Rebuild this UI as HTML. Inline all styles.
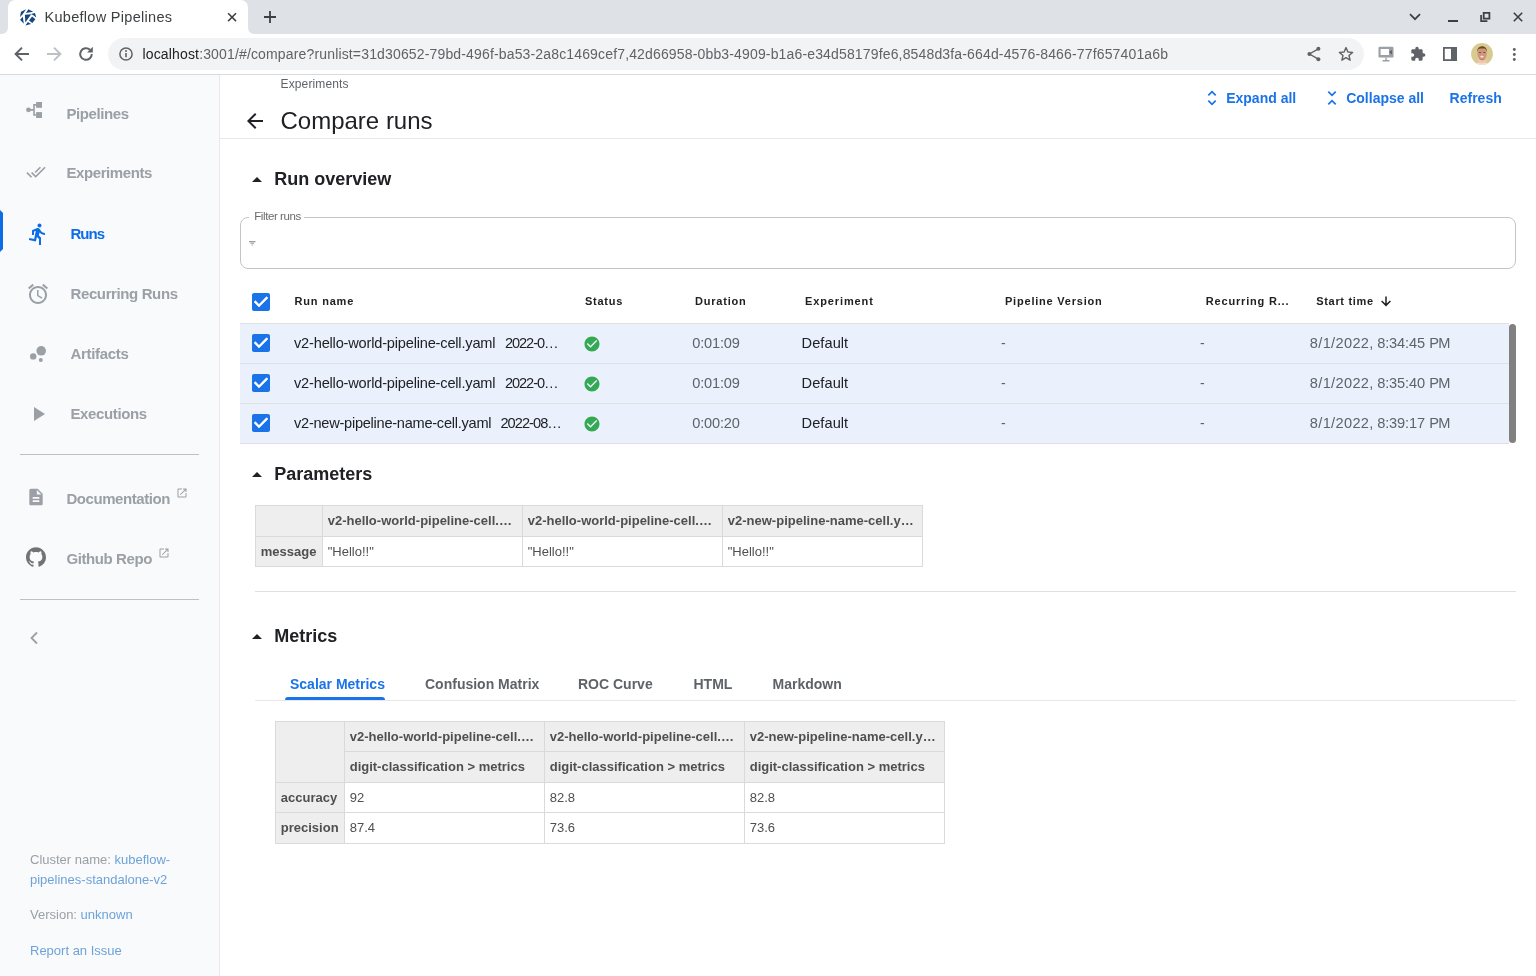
<!DOCTYPE html>
<html lang="en"><head><meta charset="utf-8"><title>Kubeflow Pipelines</title>
<style>
html,body{margin:0;padding:0;}
body{width:1536px;height:976px;overflow:hidden;background:#fff;position:relative;font-family:"Liberation Sans",sans-serif;}
#root{position:absolute;left:0;top:0;width:1536px;height:976px;will-change:transform;}
.t{position:absolute;white-space:nowrap;}
.r{position:absolute;}
svg{position:absolute;overflow:visible;}
</style></head><body><div id="root">
<div class="r" style="left:0px;top:0px;width:1536px;height:34px;background:#dee1e6;"></div>
<div class="r" style="left:0px;top:34px;width:1536px;height:40px;background:#fff;"></div>
<div class="r" style="left:0px;top:74px;width:1536px;height:1px;background:#d9dadc;"></div>
<svg style="left:0;top:0" width="260" height="34" viewBox="0 0 260 34"><path d="M0 34 C6 34 8 32 8 26 L8 8 C8 3 11 0 16 0 L240 0 C245 0 248 3 248 8 L248 26 C248 32 250 34 256 34 Z" fill="#fff"/></svg>
<svg style="left:19.900px;top:8.700px" width="16.300" height="16.300" viewBox="0 0 16.300 16.300"><g fill="#14477d"><path d="M6 0.200 L1 2.800 L0 8.300 L3 4.800 Z"/><path d="M8.400 0.300 L13.200 2.700 L5.900 4 Z"/><path d="M10.800 4.900 L15 3.900 L16.200 8.400 L13.400 6.300 Z"/><path d="M4.900 5.700 L11.200 5.200 L5.300 13.400 Z"/><path d="M2.800 7.800 L0.100 10.800 L3.800 14.800 Z"/><path d="M12.100 7.600 L15.400 10.300 L12.300 14.100 L9 11.400 Z"/><path d="M7.900 12.900 L11 15 L5.300 16.400 Z"/></g></svg>
<span class="t" style="left:44.50px;top:9px;font-size:14.5px;line-height:16px;height:16px;color:#3c4043;letter-spacing:0.293px;">Kubeflow Pipelines</span>
<svg style="left:226px;top:11px" width="12" height="12" viewBox="0 0 12 12"><path d="M2.100 2.200 L10 10.100 M10 2.200 L2.100 10.100" stroke="#3c4043" stroke-width="1.500" fill="none"/></svg>
<svg style="left:263px;top:10px" width="14" height="14" viewBox="0 0 14 14"><path d="M7 1 V13 M1 7 H13" stroke="#3c4043" stroke-width="1.8" fill="none"/></svg>
<svg style="left:1409px;top:13px" width="12" height="8" viewBox="0 0 12 8"><path d="M1 1.2 L6 6.2 L11 1.2" stroke="#3c4043" stroke-width="1.7" fill="none"/></svg>
<div class="r" style="left:1448px;top:20px;width:10px;height:1.6px;background:#3c4043;"></div>
<svg style="left:1480px;top:12px" width="11" height="11" viewBox="0 0 11 11"><path d="M3.700 0.900 H9.400 V6.600 H3.700 Z" stroke="#3c4043" stroke-width="1.800" fill="none"/><path d="M1.100 3 V9.200 H7.400" stroke="#3c4043" stroke-width="1.700" fill="none"/></svg>
<svg style="left:1513px;top:12px" width="10" height="10" viewBox="0 0 10 10"><path d="M0.8 0.8 L9.2 9.2 M9.2 0.8 L0.8 9.2" stroke="#3c4043" stroke-width="1.6" fill="none"/></svg>
<svg style="left:14px;top:46px" width="16" height="16" viewBox="0 0 16 16"><path d="M15 8 H2.5 M8 1.6 L1.6 8 L8 14.400" stroke="#5f6368" stroke-width="2" fill="none"/></svg>
<svg style="left:46px;top:46px" width="16" height="16" viewBox="0 0 16 16"><path d="M1 8 H13.5 M8 1.6 L14.4 8 L8 14.400" stroke="#bdc1c6" stroke-width="2" fill="none"/></svg>
<svg style="left:78px;top:46px" width="16" height="16" viewBox="0 0 16 16"><path d="M13.800 8 A5.800 5.800 0 1 1 12 3.800" stroke="#5f6368" stroke-width="2" fill="none"/><path d="M14.800 0.800 V6.600 H9 Z" fill="#5f6368"/></svg>
<div class="r" style="left:108px;top:38px;width:1256px;height:32px;background:#f1f3f4;border-radius:16px;"></div>
<svg style="left:119px;top:47px" width="14" height="14" viewBox="0 0 14 14"><circle cx="7" cy="7" r="6.100" stroke="#5f6368" stroke-width="1.500" fill="none"/><path d="M7 6.100 V10.300" stroke="#5f6368" stroke-width="1.600"/><circle cx="7" cy="4" r="1" fill="#5f6368"/></svg>
<span class="t" style="left:142.50px;top:46px;font-size:14px;line-height:16px;height:16px;color:#5f6368;letter-spacing:0.153px;"><span style="color:#202124">localhost</span>:3001/#/compare?runlist=31d30652-79bd-496f-ba53-2a8c1469cef7,42d66958-0bb3-4909-b1a6-e34d58179fe6,8548d3fa-664d-4576-8466-77f657401a6b</span>
<svg style="left:1306px;top:46px" width="16" height="16" viewBox="0 0 16 16"><circle cx="12.400" cy="2.800" r="2" fill="#5f6368"/><circle cx="12.400" cy="13.200" r="2" fill="#5f6368"/><circle cx="3.400" cy="8" r="2" fill="#5f6368"/><path d="M12.400 2.800 L3.400 8 L12.400 13.200" stroke="#5f6368" stroke-width="1.400" fill="none"/></svg>
<svg style="left:1338px;top:46px" width="16" height="16" viewBox="0 0 16 16"><path d="M8 1.600 L9.900 6 L14.600 6.400 L11 9.500 L12.100 14.200 L8 11.700 L3.900 14.200 L5 9.500 L1.400 6.400 L6.100 6 Z" stroke="#5f6368" stroke-width="1.400" fill="none" stroke-linejoin="round"/></svg>
<svg style="left:1378px;top:46px" width="16" height="16" viewBox="0 0 16 16"><rect x="0.500" y="0.800" width="15" height="10.800" rx="1.200" fill="#9aa0a6"/><rect x="2.600" y="3" width="8.400" height="6" fill="#fff"/><path d="M11 6 L14 4 V8.400 Z" fill="#5f6368"/><path d="M4.500 14.800 H11.500 M8 11.600 V14.800" stroke="#9aa0a6" stroke-width="1.400"/></svg>
<svg style="left:1410px;top:46px" width="16" height="16" viewBox="0 0 24 24"><path d="M20.500 11H19V7c0-1.100-.9-2-2-2h-4V3.500C13 2.120 11.880 1 10.500 1S8 2.120 8 3.500V5H4c-1.100 0-1.990.9-1.990 2v3.800H3.500c1.490 0 2.700 1.210 2.700 2.700s-1.210 2.700-2.700 2.700H2V20c0 1.100.9 2 2 2h3.800v-1.500c0-1.490 1.210-2.700 2.700-2.700 1.490 0 2.700 1.210 2.700 2.700V22H17c1.100 0 2-.9 2-2v-4h1.500c1.380 0 2.500-1.120 2.500-2.500S21.880 11 20.500 11z" fill="#5f6368"/></svg>
<svg style="left:1443px;top:47px" width="14" height="14" viewBox="0 0 14 14"><rect x="0.900" y="0.900" width="12.200" height="12.200" stroke="#5f6368" stroke-width="1.800" fill="none"/><rect x="8" y="1" width="5" height="12" fill="#5f6368"/></svg>
<svg style="left:1471px;top:43px" width="22" height="22" viewBox="0 0 22 22"><defs><clipPath id="av"><circle cx="11" cy="11" r="10.900"/></clipPath><filter id="bl" x="-20%" y="-20%" width="140%" height="140%"><feGaussianBlur stdDeviation="0.550"/></filter></defs><g clip-path="url(#av)"><rect width="22" height="22" fill="#d9ca90"/><g filter="url(#bl)"><rect x="6.800" y="15" width="8.300" height="8" fill="#efc7ab"/><path d="M3 22 C5 19.500 8 20 11 20.500 C14 20 17 19.500 19 22 Z" fill="#f1e4d8"/><ellipse cx="11.100" cy="11" rx="4.700" ry="5.900" fill="#d2957a"/><path d="M6.100 9.400 C5.600 1.200 16.600 1.200 16.100 9.400 C15.300 5.800 13.500 5.400 11.100 5.500 C8.700 5.400 6.900 5.800 6.100 9.400 Z" fill="#6a4a2c"/><ellipse cx="8.900" cy="9.500" rx="1.200" ry="0.600" fill="#5b4a44"/><ellipse cx="13.300" cy="9.500" rx="1.200" ry="0.600" fill="#5b4a44"/><ellipse cx="11" cy="13.600" rx="1.800" ry="0.900" fill="#f3e6e0"/><path d="M8.300 15.800 C10 17.200 12.200 17.200 13.900 15.800" stroke="#a87358" stroke-width="0.800" fill="none"/></g></g></svg>
<svg style="left:1512px;top:46px" width="4" height="16" viewBox="0 0 4 16"><circle cx="2.300" cy="3.500" r="1.450" fill="#5f6368"/><circle cx="2.300" cy="8.500" r="1.450" fill="#5f6368"/><circle cx="2.300" cy="13.500" r="1.450" fill="#5f6368"/></svg>
<div class="r" style="left:0px;top:75px;width:219px;height:901px;background:#f8fafb;"></div>
<div class="r" style="left:219px;top:75px;width:1px;height:901px;background:#e8e8e8;"></div>
<svg style="left:24px;top:100px" width="20" height="20" viewBox="0 0 20 20"><circle cx="4.500" cy="9.850" r="2.450" fill="#9aa0a6"/><rect x="12.100" y="2" width="5.900" height="5.800" fill="#9aa0a6"/><rect x="12.100" y="12.100" width="5.900" height="5.900" fill="#9aa0a6"/><path d="M4.500 9.850 H10 M10.020 4.100 V15.800 M9.200 4.900 H12.500 M9.200 15 H12.500" stroke="#9aa0a6" stroke-width="1.650" fill="none"/></svg>
<span class="t" style="left:66.40px;top:105px;font-size:15px;line-height:17px;height:17px;color:#9aa0a6;font-weight:700;letter-spacing:-0.395px;">Pipelines</span>
<svg style="left:26px;top:162px" width="20" height="20" viewBox="0 0 24 24"><path fill="#9aa0a6" d="M18 7l-1.410-1.410-6.340 6.340 1.410 1.410L18 7zm4.240-1.410L11.660 16.170 7.480 12l-1.410 1.410L11.660 19l12-12-1.420-1.410zM.410 13.410L6 19l1.410-1.410L1.830 12 .410 13.410z"/></svg>
<span class="t" style="left:66.40px;top:164px;font-size:15px;line-height:17px;height:17px;color:#9aa0a6;font-weight:700;letter-spacing:-0.404px;">Experiments</span>
<div class="r" style="left:0;top:210px;width:0;height:36px;border-left:3px solid #0d6de7;border-top:3px solid transparent;border-bottom:3px solid transparent;"></div>
<svg style="left:26px;top:222px" width="24" height="24" viewBox="0 0 24 24"><path fill="#0d6de7" d="M13.490 5.480c1.100 0 2-.9 2-2s-.9-2-2-2-2 .9-2 2 .9 2 2 2zm-3.600 13.900l1-4.400 2.100 2v6h2v-7.500l-2.100-2 .6-3c1.300 1.500 3.300 2.500 5.500 2.500v-2c-1.900 0-3.500-1-4.300-2.400l-1-1.600c-.4-.6-1-1-1.700-1-.3 0-.5.100-.8.100l-5.200 2.200v4.700h2v-3.400l1.800-.7-1.600 8.100-4.900-1-.4 2 7 1.400z"/></svg>
<span class="t" style="left:70.50px;top:225px;font-size:15px;line-height:17px;height:17px;color:#0d6de7;font-weight:700;letter-spacing:-1.000px;">Runs</span>
<svg style="left:26px;top:282px" width="24" height="24" viewBox="0 0 24 24"><path fill="#9aa0a6" d="M22 5.720l-4.600-3.860-1.290 1.530 4.600 3.860L22 5.720zM7.880 3.390L6.600 1.860 2 5.710l1.290 1.530 4.590-3.850zM12.500 8H11v6l4.750 2.850.75-1.230-4-2.370V8zM12 4c-4.970 0-9 4.030-9 9s4.020 9 9 9c4.970 0 9-4.030 9-9s-4.030-9-9-9zm0 16c-3.870 0-7-3.130-7-7s3.130-7 7-7 7 3.130 7 7-3.130 7-7 7z"/></svg>
<span class="t" style="left:70.50px;top:285px;font-size:15px;line-height:17px;height:17px;color:#9aa0a6;font-weight:700;letter-spacing:-0.386px;">Recurring Runs</span>
<svg style="left:26px;top:342px" width="24" height="24" viewBox="0 0 24 24"><circle cx="7.200" cy="14.400" r="3.200" fill="#9aa0a6"/><circle cx="14.800" cy="18" r="2" fill="#9aa0a6"/><circle cx="15.200" cy="8.800" r="4.800" fill="#9aa0a6"/></svg>
<span class="t" style="left:70.50px;top:345px;font-size:15px;line-height:17px;height:17px;color:#9aa0a6;font-weight:700;letter-spacing:-0.306px;">Artifacts</span>
<svg style="left:26px;top:402px" width="24" height="24" viewBox="0 0 24 24"><path d="M8 5v14l11-7z" fill="#9aa0a6"/></svg>
<span class="t" style="left:70.50px;top:405px;font-size:15px;line-height:17px;height:17px;color:#9aa0a6;font-weight:700;letter-spacing:-0.381px;">Executions</span>
<div class="r" style="left:20px;top:454px;width:179px;height:1px;background:#bdc1c6;"></div>
<div class="r" style="left:20px;top:599px;width:179px;height:1px;background:#bdc1c6;"></div>
<svg style="left:26px;top:487px" width="20" height="20" viewBox="0 0 24 24"><path fill="#9aa0a6" d="M14 2H6c-1.100 0-1.990.9-1.990 2L4 20c0 1.100.89 2 1.990 2H18c1.100 0 2-.9 2-2V8l-6-6zm2 16H8v-2h8v2zm0-4H8v-2h8v2zm-3-5V3.500L18.500 9H13z"/></svg>
<span class="t" style="left:66.40px;top:490px;font-size:15px;line-height:17px;height:17px;color:#9aa0a6;font-weight:700;letter-spacing:-0.431px;">Documentation</span>
<svg style="left:176px;top:487px" width="12" height="12" viewBox="0 0 24 24"><path fill="#9aa0a6" d="M19 19H5V5h7V3H5c-1.110 0-2 .9-2 2v14c0 1.100.89 2 2 2h14c1.100 0 2-.9 2-2v-7h-2v7zM14 3v2h3.590l-9.830 9.830 1.410 1.410L19 6.410V10h2V3h-7z"/></svg>
<svg style="left:26px;top:547px" width="20" height="20" viewBox="0 0 24 24"><path fill="#737373" d="M12 .297c-6.630 0-12 5.373-12 12 0 5.303 3.438 9.800 8.205 11.385.6.113.82-.258.82-.577 0-.285-.010-1.040-.015-2.040-3.338.724-4.042-1.610-4.042-1.610C4.422 18.070 3.633 17.700 3.633 17.700c-1.087-.744.084-.729.084-.729 1.205.084 1.838 1.236 1.838 1.236 1.070 1.835 2.809 1.305 3.495.998.108-.776.417-1.305.76-1.605-2.665-.300-5.466-1.332-5.466-5.930 0-1.310.465-2.380 1.235-3.220-.135-.303-.54-1.523.105-3.176 0 0 1.005-.322 3.300 1.230.96-.267 1.980-.399 3-.405 1.020.006 2.040.138 3 .405 2.280-1.552 3.285-1.230 3.285-1.230.645 1.653.24 2.873.12 3.176.765.840 1.230 1.910 1.230 3.220 0 4.610-2.805 5.625-5.475 5.920.42.360.81 1.096.81 2.220 0 1.606-.015 2.896-.015 3.286 0 .315.210.690.825.570C20.565 22.092 24 17.592 24 12.297c0-6.627-5.373-12-12-12"/></svg>
<span class="t" style="left:66.40px;top:550px;font-size:15px;line-height:17px;height:17px;color:#9aa0a6;font-weight:700;letter-spacing:-0.399px;">Github Repo</span>
<svg style="left:158px;top:547px" width="12" height="12" viewBox="0 0 24 24"><path fill="#9aa0a6" d="M19 19H5V5h7V3H5c-1.110 0-2 .9-2 2v14c0 1.100.89 2 2 2h14c1.100 0 2-.9 2-2v-7h-2v7zM14 3v2h3.590l-9.830 9.830 1.410 1.410L19 6.410V10h2V3h-7z"/></svg>
<svg style="left:29px;top:631px" width="10" height="14" viewBox="0 0 10 14"><path d="M8 1.500 L2.500 7 L8 12.500" stroke="#9aa0a6" stroke-width="1.800" fill="none"/></svg>
<span class="t" style="left:30.00px;top:852px;font-size:13px;line-height:15px;height:15px;color:#9aa0a6;">Cluster name: <span style="color:#6fa3d8">kubeflow-</span></span>
<span class="t" style="left:30.00px;top:872px;font-size:13px;line-height:15px;height:15px;color:#6fa3d8;">pipelines-standalone-v2</span>
<span class="t" style="left:30.00px;top:907px;font-size:13px;line-height:15px;height:15px;color:#9aa0a6;">Version: <span style="color:#6fa3d8">unknown</span></span>
<span class="t" style="left:30.00px;top:943px;font-size:13px;line-height:15px;height:15px;color:#6fa3d8;">Report an Issue</span>
<span class="t" style="left:280.50px;top:77px;font-size:12px;line-height:14px;height:14px;color:#5f6368;letter-spacing:0.131px;">Experiments</span>
<svg style="left:243px;top:109px" width="24" height="24" viewBox="0 0 24 24"><path fill="#202124" d="M20 11H7.830l5.590-5.590L12 4l-8 8 8 8 1.410-1.410L7.830 13H20v-2z"/></svg>
<span class="t" style="left:280.50px;top:107px;font-size:24px;line-height:27px;height:27px;color:#202124;">Compare runs</span>
<div class="r" style="left:220px;top:138px;width:1316px;height:1px;background:#e8e8e8;"></div>
<svg style="left:1207px;top:90px" width="10" height="16" viewBox="0 0 10 16"><path d="M1.300 5.300 L5 1.600 L8.700 5.300 M1.300 10.700 L5 14.400 L8.700 10.700" stroke="#1a73e8" stroke-width="1.700" fill="none"/></svg>
<span class="t" style="left:1226.20px;top:90px;font-size:14px;line-height:16px;height:16px;color:#1a73e8;font-weight:700;">Expand all</span>
<svg style="left:1327px;top:90px" width="10" height="16" viewBox="0 0 10 16"><path d="M1.300 1.600 L5 5.300 L8.700 1.600 M1.300 14.400 L5 10.700 L8.700 14.400" stroke="#1a73e8" stroke-width="1.700" fill="none"/></svg>
<span class="t" style="left:1346.20px;top:90px;font-size:14px;line-height:16px;height:16px;color:#1a73e8;font-weight:700;">Collapse all</span>
<span class="t" style="left:1449.60px;top:90px;font-size:14px;line-height:16px;height:16px;color:#1a73e8;font-weight:700;">Refresh</span>
<svg style="left:252px;top:177px" width="10" height="5" viewBox="0 0 10 5"><path d="M0 5 L5 0 L10 5 Z" fill="#202124"/></svg>
<span class="t" style="left:274.30px;top:169px;font-size:18px;line-height:20px;height:20px;color:#202124;font-weight:700;">Run overview</span>
<div class="r" style="left:240px;top:217px;width:1274px;height:50px;border:1px solid #c4c4c4;border-radius:8px;"></div>
<div class="r" style="left:249px;top:214px;width:55px;height:8px;background:#fff;"></div>
<span class="t" style="left:254.25px;top:210px;font-size:11.5px;line-height:12px;height:12px;color:#6b6b6b;letter-spacing:-0.412px;">Filter runs</span>
<svg style="left:249px;top:240.500px" width="7" height="5" viewBox="0 0 7 5"><path d="M0 0.600 H6.500 M1.300 2.300 H5.200 M2.600 4 H3.900" stroke="#9aa0a6" stroke-width="1.100"/></svg>
<svg style="left:249px;top:290px" width="24" height="24" viewBox="0 0 24 24"><path fill="#1a73e8" d="M19 3H5c-1.110 0-2 .9-2 2v14c0 1.100.890 2 2 2h14c1.110 0 2-.9 2-2V5c0-1.100-.890-2-2-2zm-9 14l-5-5 1.410-1.410L10 14.170l7.590-7.590L19 8l-9 9z"/><path d="M5 12 L10 17 L19 8 L17.590 6.580 L10 14.170 L6.410 10.590 Z" fill="#fff"/></svg>
<span class="t" style="left:294.50px;top:295px;font-size:11px;line-height:12px;height:12px;color:#202124;font-weight:700;letter-spacing:0.804px;">Run name</span>
<span class="t" style="left:585.00px;top:295px;font-size:11px;line-height:12px;height:12px;color:#202124;font-weight:700;letter-spacing:0.736px;">Status</span>
<span class="t" style="left:695.00px;top:295px;font-size:11px;line-height:12px;height:12px;color:#202124;font-weight:700;letter-spacing:0.797px;">Duration</span>
<span class="t" style="left:805.00px;top:295px;font-size:11px;line-height:12px;height:12px;color:#202124;font-weight:700;letter-spacing:0.877px;">Experiment</span>
<span class="t" style="left:1005.00px;top:295px;font-size:11px;line-height:12px;height:12px;color:#202124;font-weight:700;letter-spacing:0.788px;">Pipeline Version</span>
<span class="t" style="left:1205.75px;top:295px;font-size:11px;line-height:12px;height:12px;color:#202124;font-weight:700;letter-spacing:0.821px;">Recurring R...</span>
<span class="t" style="left:1316.25px;top:295px;font-size:11px;line-height:12px;height:12px;color:#202124;font-weight:700;letter-spacing:0.674px;">Start time</span>
<svg style="left:1380px;top:296px" width="12" height="11" viewBox="0 0 12 11"><path d="M6 0.500 V9.200 M1.600 5 L6 9.400 L10.400 5" stroke="#202124" stroke-width="1.500" fill="none"/></svg>
<div class="r" style="left:240px;top:323px;width:1269px;height:1px;background:#e0e0e0;"></div>
<div class="r" style="left:240px;top:324px;width:1269px;height:39px;background:#eaf1fd;"></div>
<div class="r" style="left:240px;top:363px;width:1269px;height:1px;background:#e0e0e0;"></div>
<svg style="left:249px;top:331px" width="24" height="24" viewBox="0 0 24 24"><path fill="#1a73e8" d="M19 3H5c-1.110 0-2 .9-2 2v14c0 1.100.890 2 2 2h14c1.110 0 2-.9 2-2V5c0-1.100-.890-2-2-2zm-9 14l-5-5 1.410-1.410L10 14.170l7.590-7.590L19 8l-9 9z"/><path d="M5 12 L10 17 L19 8 L17.590 6.580 L10 14.170 L6.410 10.590 Z" fill="#fff"/></svg>
<span class="t" style="left:294.00px;top:335px;font-size:14.6px;line-height:16px;height:16px;color:#202124;letter-spacing:-0.191px;">v2-hello-world-pipeline-cell.yaml</span>
<span class="t" style="left:505.00px;top:335px;font-size:14.6px;line-height:16px;height:16px;color:#202124;letter-spacing:-1.077px;">2022-0…</span>
<svg style="left:583px;top:335.3px" width="18" height="18" viewBox="0 0 24 24"><path fill="#34a853" d="M12 2C6.480 2 2 6.480 2 12s4.480 10 10 10 10-4.480 10-10S17.520 2 12 2zm-2 15l-5-5 1.410-1.410L10 14.170l7.590-7.590L19 8l-9 9z"/><path d="M6.400 12 L10 15.600 L17.600 8" stroke="#fff" stroke-width="0" fill="none"/></svg>
<span class="t" style="left:692.30px;top:335px;font-size:14.6px;line-height:16px;height:16px;color:#5f6368;letter-spacing:-0.185px;">0:01:09</span>
<span class="t" style="left:801.60px;top:335px;font-size:14.6px;line-height:16px;height:16px;color:#202124;letter-spacing:0.057px;">Default</span>
<span class="t" style="left:1001.00px;top:335px;font-size:14px;line-height:16px;height:16px;color:#5f6368;">-</span>
<span class="t" style="left:1200.00px;top:335px;font-size:14px;line-height:16px;height:16px;color:#5f6368;">-</span>
<span class="t" style="left:1309.80px;top:335px;font-size:14.6px;line-height:16px;height:16px;color:#5f6368;letter-spacing:0.339px;">8/1/2022,</span>
<span class="t" style="left:1377.20px;top:335px;font-size:14.6px;line-height:16px;height:16px;color:#5f6368;letter-spacing:-0.119px;">8:34:45</span>
<span class="t" style="left:1429.20px;top:335px;font-size:14.6px;line-height:16px;height:16px;color:#5f6368;letter-spacing:-0.700px;">PM</span>
<div class="r" style="left:240px;top:364px;width:1269px;height:39px;background:#eaf1fd;"></div>
<div class="r" style="left:240px;top:403px;width:1269px;height:1px;background:#e0e0e0;"></div>
<svg style="left:249px;top:371px" width="24" height="24" viewBox="0 0 24 24"><path fill="#1a73e8" d="M19 3H5c-1.110 0-2 .9-2 2v14c0 1.100.890 2 2 2h14c1.110 0 2-.9 2-2V5c0-1.100-.890-2-2-2zm-9 14l-5-5 1.410-1.410L10 14.170l7.590-7.590L19 8l-9 9z"/><path d="M5 12 L10 17 L19 8 L17.590 6.580 L10 14.170 L6.410 10.590 Z" fill="#fff"/></svg>
<span class="t" style="left:294.00px;top:375px;font-size:14.6px;line-height:16px;height:16px;color:#202124;letter-spacing:-0.191px;">v2-hello-world-pipeline-cell.yaml</span>
<span class="t" style="left:505.00px;top:375px;font-size:14.6px;line-height:16px;height:16px;color:#202124;letter-spacing:-1.077px;">2022-0…</span>
<svg style="left:583px;top:375.3px" width="18" height="18" viewBox="0 0 24 24"><path fill="#34a853" d="M12 2C6.480 2 2 6.480 2 12s4.480 10 10 10 10-4.480 10-10S17.520 2 12 2zm-2 15l-5-5 1.410-1.410L10 14.170l7.590-7.590L19 8l-9 9z"/><path d="M6.400 12 L10 15.600 L17.600 8" stroke="#fff" stroke-width="0" fill="none"/></svg>
<span class="t" style="left:692.30px;top:375px;font-size:14.6px;line-height:16px;height:16px;color:#5f6368;letter-spacing:-0.185px;">0:01:09</span>
<span class="t" style="left:801.60px;top:375px;font-size:14.6px;line-height:16px;height:16px;color:#202124;letter-spacing:0.057px;">Default</span>
<span class="t" style="left:1001.00px;top:375px;font-size:14px;line-height:16px;height:16px;color:#5f6368;">-</span>
<span class="t" style="left:1200.00px;top:375px;font-size:14px;line-height:16px;height:16px;color:#5f6368;">-</span>
<span class="t" style="left:1309.80px;top:375px;font-size:14.6px;line-height:16px;height:16px;color:#5f6368;letter-spacing:0.339px;">8/1/2022,</span>
<span class="t" style="left:1377.20px;top:375px;font-size:14.6px;line-height:16px;height:16px;color:#5f6368;letter-spacing:-0.119px;">8:35:40</span>
<span class="t" style="left:1429.20px;top:375px;font-size:14.6px;line-height:16px;height:16px;color:#5f6368;letter-spacing:-0.700px;">PM</span>
<div class="r" style="left:240px;top:404px;width:1269px;height:39px;background:#eaf1fd;"></div>
<div class="r" style="left:240px;top:443px;width:1269px;height:1px;background:#e0e0e0;"></div>
<svg style="left:249px;top:411px" width="24" height="24" viewBox="0 0 24 24"><path fill="#1a73e8" d="M19 3H5c-1.110 0-2 .9-2 2v14c0 1.100.890 2 2 2h14c1.110 0 2-.9 2-2V5c0-1.100-.890-2-2-2zm-9 14l-5-5 1.410-1.410L10 14.170l7.590-7.590L19 8l-9 9z"/><path d="M5 12 L10 17 L19 8 L17.590 6.580 L10 14.170 L6.410 10.590 Z" fill="#fff"/></svg>
<span class="t" style="left:294.00px;top:415px;font-size:14.6px;line-height:16px;height:16px;color:#202124;letter-spacing:-0.265px;">v2-new-pipeline-name-cell.yaml</span>
<span class="t" style="left:500.40px;top:415px;font-size:14.6px;line-height:16px;height:16px;color:#202124;letter-spacing:-0.940px;">2022-08…</span>
<svg style="left:583px;top:415.3px" width="18" height="18" viewBox="0 0 24 24"><path fill="#34a853" d="M12 2C6.480 2 2 6.480 2 12s4.480 10 10 10 10-4.480 10-10S17.520 2 12 2zm-2 15l-5-5 1.410-1.410L10 14.170l7.590-7.590L19 8l-9 9z"/><path d="M6.400 12 L10 15.600 L17.600 8" stroke="#fff" stroke-width="0" fill="none"/></svg>
<span class="t" style="left:692.30px;top:415px;font-size:14.6px;line-height:16px;height:16px;color:#5f6368;letter-spacing:-0.185px;">0:00:20</span>
<span class="t" style="left:801.60px;top:415px;font-size:14.6px;line-height:16px;height:16px;color:#202124;letter-spacing:0.057px;">Default</span>
<span class="t" style="left:1001.00px;top:415px;font-size:14px;line-height:16px;height:16px;color:#5f6368;">-</span>
<span class="t" style="left:1200.00px;top:415px;font-size:14px;line-height:16px;height:16px;color:#5f6368;">-</span>
<span class="t" style="left:1309.80px;top:415px;font-size:14.6px;line-height:16px;height:16px;color:#5f6368;letter-spacing:0.339px;">8/1/2022,</span>
<span class="t" style="left:1377.20px;top:415px;font-size:14.6px;line-height:16px;height:16px;color:#5f6368;letter-spacing:-0.119px;">8:39:17</span>
<span class="t" style="left:1429.20px;top:415px;font-size:14.6px;line-height:16px;height:16px;color:#5f6368;letter-spacing:-0.700px;">PM</span>
<div class="r" style="left:1509px;top:324px;width:7px;height:119px;background:#808080;border-radius:3.500px;"></div>
<svg style="left:252px;top:471.5px" width="10" height="5" viewBox="0 0 10 5"><path d="M0 5 L5 0 L10 5 Z" fill="#202124"/></svg>
<span class="t" style="left:274.30px;top:464px;font-size:18px;line-height:20px;height:20px;color:#202124;font-weight:700;">Parameters</span>
<div class="r" style="left:255px;top:505px;width:668px;height:31px;background:#eeeeee;"></div>
<div class="r" style="left:255px;top:536px;width:67px;height:31px;background:#eeeeee;"></div>
<div class="r" style="left:255px;top:505px;width:668px;height:1px;background:#dadada;"></div>
<div class="r" style="left:255px;top:536px;width:668px;height:1px;background:#dadada;"></div>
<div class="r" style="left:255px;top:566px;width:668px;height:1px;background:#dadada;"></div>
<div class="r" style="left:255px;top:505px;width:1px;height:62px;background:#dadada;"></div>
<div class="r" style="left:322px;top:505px;width:1px;height:62px;background:#dadada;"></div>
<div class="r" style="left:522px;top:505px;width:1px;height:62px;background:#dadada;"></div>
<div class="r" style="left:722px;top:505px;width:1px;height:62px;background:#dadada;"></div>
<div class="r" style="left:922px;top:505px;width:1px;height:62px;background:#dadada;"></div>
<span class="t" style="left:327.70px;top:513px;font-size:13px;line-height:15px;height:15px;color:#4f4f4f;font-weight:700;letter-spacing:0.000px;">v2-hello-world-pipeline-cell.…</span>
<span class="t" style="left:527.70px;top:513px;font-size:13px;line-height:15px;height:15px;color:#4f4f4f;font-weight:700;letter-spacing:0.000px;">v2-hello-world-pipeline-cell.…</span>
<span class="t" style="left:727.70px;top:513px;font-size:13px;line-height:15px;height:15px;color:#4f4f4f;font-weight:700;letter-spacing:0.012px;">v2-new-pipeline-name-cell.y…</span>
<span class="t" style="left:260.80px;top:544px;font-size:13px;line-height:15px;height:15px;color:#4f4f4f;font-weight:700;">message</span>
<span class="t" style="left:327.70px;top:544px;font-size:13px;line-height:15px;height:15px;color:#4f4f4f;">&quot;Hello!!&quot;</span>
<span class="t" style="left:527.70px;top:544px;font-size:13px;line-height:15px;height:15px;color:#4f4f4f;">&quot;Hello!!&quot;</span>
<span class="t" style="left:727.70px;top:544px;font-size:13px;line-height:15px;height:15px;color:#4f4f4f;">&quot;Hello!!&quot;</span>
<div class="r" style="left:255px;top:591px;width:1261px;height:1px;background:#e0e0e0;"></div>
<svg style="left:252px;top:634px" width="10" height="5" viewBox="0 0 10 5"><path d="M0 5 L5 0 L10 5 Z" fill="#202124"/></svg>
<span class="t" style="left:274.30px;top:626px;font-size:18px;line-height:20px;height:20px;color:#202124;font-weight:700;">Metrics</span>
<span class="t" style="left:290.00px;top:676px;font-size:14px;line-height:16px;height:16px;color:#1a73e8;font-weight:700;">Scalar Metrics</span>
<span class="t" style="left:425.00px;top:676px;font-size:14px;line-height:16px;height:16px;color:#5f6368;font-weight:700;">Confusion Matrix</span>
<span class="t" style="left:578.00px;top:676px;font-size:14px;line-height:16px;height:16px;color:#5f6368;font-weight:700;">ROC Curve</span>
<span class="t" style="left:693.50px;top:676px;font-size:14px;line-height:16px;height:16px;color:#5f6368;font-weight:700;">HTML</span>
<span class="t" style="left:772.50px;top:676px;font-size:14px;line-height:16px;height:16px;color:#5f6368;font-weight:700;">Markdown</span>
<div class="r" style="left:285px;top:697px;width:99.5px;height:3px;background:#1a73e8;border-radius:3px 3px 0 0;"></div>
<div class="r" style="left:255px;top:700px;width:1261px;height:1px;background:#e8e8e8;"></div>
<div class="r" style="left:275px;top:721px;width:670px;height:61px;background:#eeeeee;"></div>
<div class="r" style="left:275px;top:782px;width:69px;height:62px;background:#eeeeee;"></div>
<div class="r" style="left:275px;top:721px;width:670px;height:1px;background:#dadada;"></div>
<div class="r" style="left:344px;top:751px;width:601px;height:1px;background:#dadada;"></div>
<div class="r" style="left:275px;top:782px;width:670px;height:1px;background:#dadada;"></div>
<div class="r" style="left:275px;top:812px;width:670px;height:1px;background:#dadada;"></div>
<div class="r" style="left:275px;top:843px;width:670px;height:1px;background:#dadada;"></div>
<div class="r" style="left:275px;top:721px;width:1px;height:123px;background:#dadada;"></div>
<div class="r" style="left:344px;top:721px;width:1px;height:123px;background:#dadada;"></div>
<div class="r" style="left:544px;top:721px;width:1px;height:123px;background:#dadada;"></div>
<div class="r" style="left:744px;top:721px;width:1px;height:123px;background:#dadada;"></div>
<div class="r" style="left:944px;top:721px;width:1px;height:123px;background:#dadada;"></div>
<span class="t" style="left:349.70px;top:729px;font-size:13px;line-height:15px;height:15px;color:#4f4f4f;font-weight:700;letter-spacing:0.000px;">v2-hello-world-pipeline-cell.…</span>
<span class="t" style="left:549.70px;top:729px;font-size:13px;line-height:15px;height:15px;color:#4f4f4f;font-weight:700;letter-spacing:0.000px;">v2-hello-world-pipeline-cell.…</span>
<span class="t" style="left:749.70px;top:729px;font-size:13px;line-height:15px;height:15px;color:#4f4f4f;font-weight:700;letter-spacing:0.012px;">v2-new-pipeline-name-cell.y…</span>
<span class="t" style="left:349.70px;top:759px;font-size:13px;line-height:15px;height:15px;color:#4f4f4f;font-weight:700;letter-spacing:0.000px;">digit-classification &gt; metrics</span>
<span class="t" style="left:549.70px;top:759px;font-size:13px;line-height:15px;height:15px;color:#4f4f4f;font-weight:700;letter-spacing:0.000px;">digit-classification &gt; metrics</span>
<span class="t" style="left:749.70px;top:759px;font-size:13px;line-height:15px;height:15px;color:#4f4f4f;font-weight:700;letter-spacing:0.000px;">digit-classification &gt; metrics</span>
<span class="t" style="left:280.80px;top:790px;font-size:13px;line-height:15px;height:15px;color:#4f4f4f;font-weight:700;">accuracy</span>
<span class="t" style="left:349.70px;top:790px;font-size:13px;line-height:15px;height:15px;color:#4f4f4f;">92</span>
<span class="t" style="left:549.70px;top:790px;font-size:13px;line-height:15px;height:15px;color:#4f4f4f;">82.8</span>
<span class="t" style="left:749.70px;top:790px;font-size:13px;line-height:15px;height:15px;color:#4f4f4f;">82.8</span>
<span class="t" style="left:280.80px;top:820px;font-size:13px;line-height:15px;height:15px;color:#4f4f4f;font-weight:700;">precision</span>
<span class="t" style="left:349.70px;top:820px;font-size:13px;line-height:15px;height:15px;color:#4f4f4f;">87.4</span>
<span class="t" style="left:549.70px;top:820px;font-size:13px;line-height:15px;height:15px;color:#4f4f4f;">73.6</span>
<span class="t" style="left:749.70px;top:820px;font-size:13px;line-height:15px;height:15px;color:#4f4f4f;">73.6</span>
</div></body></html>
